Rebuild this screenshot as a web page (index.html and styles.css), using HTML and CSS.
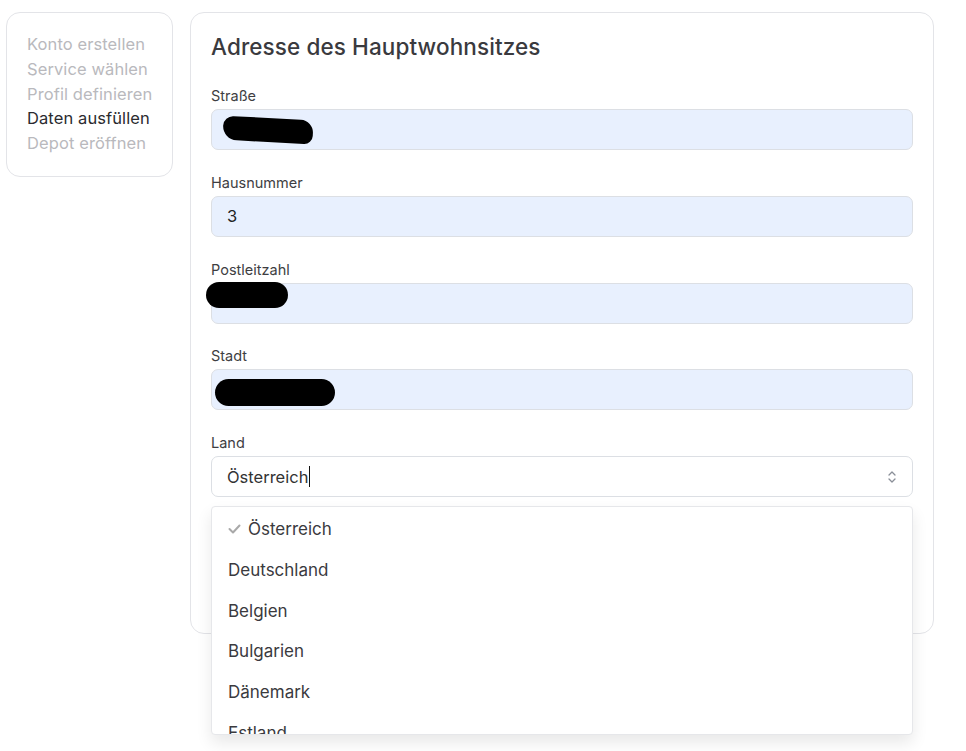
FILE: index.html
```html
<!DOCTYPE html>
<html lang="de">
<head>
    <meta charset="UTF-8">
    <meta name="viewport" content="width=device-width, initial-scale=1.0">
    <title>Adresse des Hauptwohnsitzes</title>
    <link rel="stylesheet" href="styles.css">
</head>
<body>
    <div class="page">
        <!-- Steps -->
        <div class="steps">
            <div class="step">Konto erstellen</div>
            <div class="step">Service wählen</div>
            <div class="step">Profil definieren</div>
            <div class="step active">Daten ausfüllen</div>
            <div class="step">Depot eröffnen</div>
        </div>

        <!-- Address form -->
        <div class="card">
            <h1>Adresse des Hauptwohnsitzes</h1>

            <div class="field">
                <label>Straße</label>
                <div class="input autofill">
                    <span class="redact redact-street"></span>
                </div>
            </div>

            <div class="field">
                <label>Hausnummer</label>
                <div class="input autofill">3</div>
            </div>

            <div class="field">
                <label>Postleitzahl</label>
                <div class="input autofill">
                    <span class="redact redact-zip"></span>
                </div>
            </div>

            <div class="field">
                <label>Stadt</label>
                <div class="input autofill">
                    <span class="redact redact-city"></span>
                </div>
            </div>

            <div class="field select-field">
                <label>Land</label>
                <div class="input select">
                    <span>Österreich</span><span class="caret"></span>
                    <svg class="chevrons" width="10" height="16" viewBox="0 0 10 16" fill="none" stroke="#8a8f98" stroke-width="1.3" stroke-linecap="round" stroke-linejoin="round">
                        <path d="M2 6 L5 3 L8 6"/>
                        <path d="M2 10 L5 13 L8 10"/>
                    </svg>
                </div>

                <ul class="options">
                    <li class="selected">
                        <svg class="check" width="13" height="10" viewBox="0 0 13 10" fill="none" stroke="#a9a9a9" stroke-width="2" stroke-linecap="round" stroke-linejoin="round">
                            <path d="M1.5 5 L5 8.5 L11.5 1.5"/>
                        </svg>
                        Österreich
                    </li>
                    <li>Deutschland</li>
                    <li>Belgien</li>
                    <li>Bulgarien</li>
                    <li>Dänemark</li>
                    <li>Estland</li>
                </ul>
            </div>
        </div>
    </div>
</body>
</html>
```

FILE: styles.css
```css
* {
    margin: 0;
    padding: 0;
    box-sizing: border-box;
    font-family: 'Inter', 'Open Sans', sans-serif;
}

html, body {
    height: 100%;
    background: #ffffff;
    color: #333;
}

.page {
    display: flex;
    align-items: flex-start;
    gap: 17px;
    min-height: 751px;
    padding: 12px 0 0 6px;
}

.steps {
    width: 167px;
    padding: 19px 0 20px 20px;
    border: 1px solid #e3e4e8;
    border-radius: 14px;
}

.step {
    font-size: 16.5px;
    line-height: 24.75px;
    letter-spacing: 0.1px;
    color: #b9b9bd;
}

.step.active {
    color: #2b2b2f;
}

.card {
    width: 744px;
    height: 622px;
    padding: 19px 20px 20px 20px;
    border: 1px solid #e3e4e8;
    border-radius: 14px;
}

h1 {
    font-size: 22.5px;
    font-weight: 500;
    line-height: 30px;
    letter-spacing: 0.1px;
    color: #3a3a3e;
    margin-bottom: 24px;
}

.field {
    margin-bottom: 22.75px;
}

.field label {
    display: block;
    font-size: 14.5px;
    line-height: 20px;
    color: #3e3e42;
    margin-bottom: 3px;
}

.input {
    position: relative;
    display: flex;
    align-items: center;
    height: 41px;
    padding: 0 15px;
    border: 1px solid #dcdfe4;
    border-radius: 7px;
    font-size: 16.5px;
    color: #222;
}

.input.autofill {
    background: #e8f0fe;
}

.redact {
    position: absolute;
    background: #000;
    border-radius: 14px;
}

.redact-street {
    left: 11px;
    top: 8px;
    width: 90px;
    height: 24px;
    border-radius: 14px 18px 12px 20px;
    transform: rotate(3deg);
}

.redact-zip {
    left: -6px;
    top: -2px;
    width: 82px;
    height: 26px;
    border-radius: 14px;
}

.redact-city {
    left: 3px;
    top: 9px;
    width: 120px;
    height: 27px;
    border-radius: 14px;
}

.select-field {
    position: relative;
}

.input.select {
    background: #fff;
    color: #333;
}

.caret {
    display: inline-block;
    width: 1px;
    height: 21px;
    background: #111;
    margin-left: 1px;
}

.chevrons {
    position: absolute;
    right: 15px;
    top: 12px;
}

.options {
    position: absolute;
    left: 0;
    right: 0;
    top: 73px;
    height: 229px;
    overflow: hidden;
    list-style: none;
    padding-top: 2px;
    background: #fff;
    border: 1px solid #e6e7ea;
    border-radius: 4px;
    box-shadow: 0 8px 16px rgba(0, 0, 0, 0.09);
    z-index: 2;
}

.options li {
    display: flex;
    align-items: center;
    height: 40.7px;
    padding-left: 16px;
    font-size: 17px;
    color: #3a3a3e;
}

.check {
    margin-right: 7px;
}
```
